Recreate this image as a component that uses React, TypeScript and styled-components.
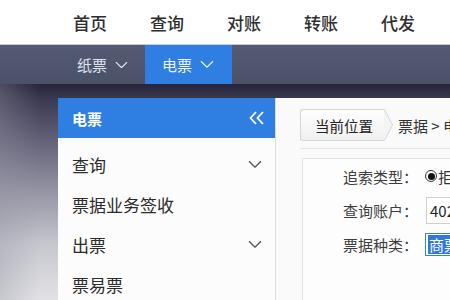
import React from "react";
import styled, { createGlobalStyle } from "styled-components";

const GlobalStyle = createGlobalStyle`
  html, body { margin: 0; padding: 0; }
  body {
    font-family: "Noto Sans CJK SC", "Noto Sans", "Liberation Sans", sans-serif;
    overflow: hidden;
  }
`;

const Page = styled.div`
  width: 450px;
  height: 300px;
  overflow: hidden;
  display: flex;
  flex-direction: column;
`;

const TopBar = styled.div`
  height: 44px;
  flex: none;
  background: #ffffff;
  display: flex;
  align-items: center;
  padding-left: 73px;
  gap: 43px;
`;

const TopItem = styled.div`
  font-size: 17px;
  font-weight: 500;
  color: #2e2e2e;
  white-space: nowrap;
  line-height: 1;
`;

const SubBar = styled.div`
  height: 39px;
  flex: none;
  background: linear-gradient(180deg, #535a72 0%, #4b5169 100%);
  border-top: 1px solid #c9ccd6;
  display: flex;
  align-items: stretch;
  padding-left: 60px;
`;

const SubTab = styled.div<{ $active?: boolean }>`
  display: flex;
  align-items: center;
  gap: 8px;
  padding: 0 17px;
  width: ${(p) => (p.$active ? "87px" : "auto")};
  box-sizing: border-box;
  background: ${(p) => (p.$active ? "#2f7fe3" : "transparent")};
  color: ${(p) => (p.$active ? "#eef4ff" : "#dfe3ec")};
  font-size: 15px;
  white-space: nowrap;
`;

const Body = styled.div`
  flex: 1;
  display: flex;
  padding: 14px 0 0 58px;
  background:
    linear-gradient(90deg, rgba(150, 150, 165, 0.35) 0px, rgba(150, 150, 165, 0) 40px),
    linear-gradient(180deg, #26243a 0px, #3a3850 14px, #5c5b72 50px, #9797a6 110px, #c6c6ce 160px, #e2e2e6 217px);
`;

const Sidebar = styled.div`
  width: 217px;
  flex: none;
  background: #fcfcfc;
  border-right: 1px solid #dcdcdc;
  display: flex;
  flex-direction: column;
`;

const SideHeader = styled.div`
  height: 40px;
  background: #2f7fe3;
  color: #ffffff;
  display: flex;
  align-items: center;
  justify-content: space-between;
  padding: 0 10px 0 14px;
  font-size: 15px;
  font-weight: 700;
`;

const SideList = styled.div`
  padding-top: 6px;
  display: flex;
  flex-direction: column;
`;

const SideItem = styled.div`
  height: 40px;
  display: flex;
  align-items: center;
  justify-content: space-between;
  padding: 0 13px 0 14px;
  font-size: 17px;
  color: #2b2b2b;
  white-space: nowrap;
`;

const Content = styled.div`
  flex: 1;
  background: #fafafa;
  padding: 10px 0 0 24px;
  display: flex;
  flex-direction: column;
  min-width: 0;
  overflow: hidden;
`;

const Crumbs = styled.div`
  display: flex;
  align-items: center;
  height: 34px;
  flex: none;
  border-bottom: 1px solid #e4e4e4;
  padding-bottom: 6px;
`;

const CrumbTab = styled.div`
  height: 30px;
  display: flex;
  align-items: center;
  padding: 0 11px 0 14px;
  background: linear-gradient(180deg, #ffffff 0%, #f0f0f0 100%);
  border: 1px solid #d6d6d6;
  border-right: none;
  border-radius: 3px 0 0 3px;
  font-size: 14.5px;
  color: #222;
  white-space: nowrap;
`;

const CrumbArrow = styled.svg`
  width: 9px;
  height: 32px;
  flex: none;
`;

const CrumbPath = styled.div`
  font-size: 15px;
  color: #333;
  white-space: nowrap;
  margin-left: 5px;
`;

const FormBox = styled.div`
  margin-top: 9px;
  margin-left: 2px;
  flex: 1;
  border: 1px solid #e2e2e2;
  border-right: none;
  border-bottom: none;
  background: #fdfdfd;
  padding: 3px 0 0 15px;
  display: flex;
  flex-direction: column;
  gap: 6px;
`;

const FormRow = styled.div`
  display: flex;
  align-items: center;
  height: 28px;
  white-space: nowrap;
`;

const Label = styled.div`
  width: 100px;
  flex: none;
  text-align: right;
  font-size: 15px;
  color: #3d3d3d;
`;

const Radio = styled.span`
  width: 12px;
  height: 12px;
  border: 1px solid #333;
  border-radius: 50%;
  display: inline-flex;
  align-items: center;
  justify-content: center;
  box-sizing: border-box;
  margin-left: 7px;
  flex: none;
  &::after {
    content: "";
    width: 7px;
    height: 7px;
    border-radius: 50%;
    background: #111;
  }
`;

const RadioText = styled.span`
  font-size: 15px;
  color: #333;
  margin-left: 1px;
`;

const Input = styled.div`
  margin-left: 8px;
  height: 27px;
  width: 80px;
  border: 1px solid #cfcfcf;
  background: #fff;
  display: flex;
  align-items: center;
  padding-left: 3px;
  font-size: 15px;
  color: #222;
  box-sizing: border-box;
  flex: none;
`;

const Select = styled.div`
  margin-left: 7px;
  height: 23px;
  width: 80px;
  border: 1px solid #3a7fd8;
  background: #fff;
  display: flex;
  align-items: center;
  padding-left: 2px;
  box-sizing: border-box;
  flex: none;
`;

const Selected = styled.span`
  background: #2f78dc;
  color: #fff;
  font-size: 15px;
  line-height: 19px;
  padding: 0 1px;
`;

const Chevron = ({ color, size = 13 }: { color: string; size?: number }) => (
  <svg width={size} height={size * 0.6} viewBox="0 0 14 8" fill="none">
    <polyline points="1,1 7,7 13,1" stroke={color} strokeWidth="1.3" />
  </svg>
);

const DoubleLeft = () => (
  <svg width="16" height="14" viewBox="0 0 16 14" fill="none">
    <polyline points="7,1 1.5,7 7,13" stroke="#fff" strokeWidth="1.8" />
    <polyline points="14,1 8.5,7 14,13" stroke="#fff" strokeWidth="1.8" />
  </svg>
);

export default function App() {
  return (
    <>
      <GlobalStyle />
      <Page>
        <TopBar>
          {["首页", "查询", "对账", "转账", "代发"].map((t) => (
            <TopItem key={t}>{t}</TopItem>
          ))}
        </TopBar>
        <SubBar>
          <SubTab>
            纸票 <Chevron color="#e4e8f0" />
          </SubTab>
          <SubTab $active>
            电票 <Chevron color="#eef4ff" size={14} />
          </SubTab>
        </SubBar>
        <Body>
          <Sidebar>
            <SideHeader>
              电票
              <DoubleLeft />
            </SideHeader>
            <SideList>
              <SideItem>
                查询 <Chevron color="#555" size={14} />
              </SideItem>
              <SideItem>票据业务签收</SideItem>
              <SideItem>
                出票 <Chevron color="#555" size={14} />
              </SideItem>
              <SideItem>票易票</SideItem>
            </SideList>
          </Sidebar>
          <Content>
            <Crumbs>
              <CrumbTab>当前位置</CrumbTab>
              <CrumbArrow viewBox="0 0 9 32">
                <polygon points="0,0.5 0.5,0.5 8.5,16 0.5,31.5 0,31.5" fill="#f4f4f4" stroke="none" />
                <polyline points="0,0.5 0.5,0.5 8.5,16 0.5,31.5 0,31.5" fill="none" stroke="#d6d6d6" strokeWidth="1" />
              </CrumbArrow>
              <CrumbPath>票据 &gt; 电票</CrumbPath>
            </Crumbs>
            <FormBox>
              <FormRow>
                <Label>追索类型：</Label>
                <Radio />
                <RadioText>拒付追索</RadioText>
              </FormRow>
              <FormRow>
                <Label>查询账户：</Label>
                <Input>40200</Input>
              </FormRow>
              <FormRow>
                <Label>票据种类：</Label>
                <Select>
                  <Selected>商票</Selected>
                </Select>
              </FormRow>
            </FormBox>
          </Content>
        </Body>
      </Page>
    </>
  );
}
